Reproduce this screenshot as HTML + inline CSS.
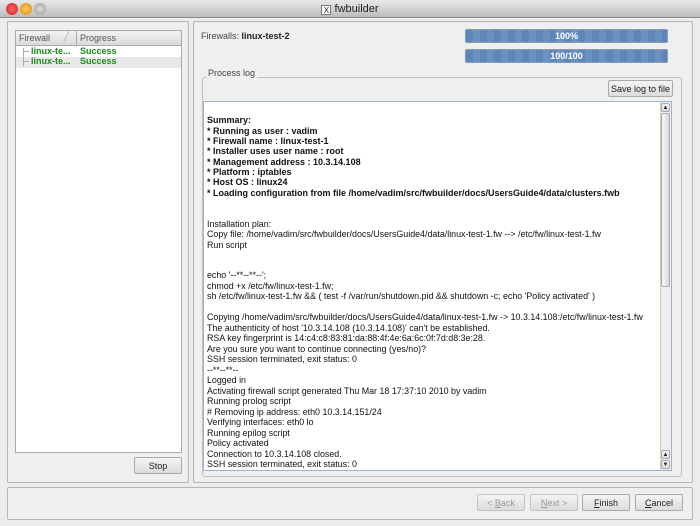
<!DOCTYPE html><html><head><style>
*{box-sizing:border-box;margin:0;padding:0}
body{width:700px;height:526px;background:#ececec;font-family:"Liberation Sans",sans-serif;font-size:9px;color:#222;position:relative;overflow:hidden}
.a{position:absolute}
.tb{left:0;top:0;width:700px;height:18px;background:linear-gradient(#e8e8e8,#bcbcbc);border-bottom:1px solid #8a8a8a;text-align:center;font-size:11px;line-height:18px;color:#222}
.dot{top:3px;width:12px;height:12px;border-radius:50%}
.frame{border:1px solid #b5b5b5;border-radius:2px;background:#efefef}
.btn{border:1px solid #aaa;border-radius:2px;background:linear-gradient(#f4f4f4,#dcdcdc);text-align:center;font-size:9px;line-height:16px;color:#222}
.dis{color:#999;border-color:#c4c4c4}
.bar{left:465px;width:203px;height:14px;border:1px solid #8a9ab0;border-radius:2px;background:repeating-linear-gradient(90deg,#5e87b8 0 7px,#6a91c0 7px 14px);color:#fff;font-weight:bold;text-align:center;line-height:12px;font-size:9px}
.log{left:203px;top:101px;width:469px;height:370px;background:#fff;border:1px solid #9fb3cc;overflow:hidden}
.log div{position:absolute;left:3px;white-space:pre;font-size:8.9px;line-height:11px;color:#111}
.log .b{font-weight:bold;font-size:9px}
.g{color:#1a8a1a;font-weight:bold}
</style></head><body>
<div class="a tb"><span style="display:inline-block;width:10px;height:10px;border:1px solid #777;background:#fff;font-size:8px;line-height:9px;vertical-align:-1px">X</span> fwbuilder</div>
<div class="a dot" style="left:6px;background:radial-gradient(#f66,#c22)"></div>
<div class="a dot" style="left:20px;background:radial-gradient(#fc6,#d80)"></div>
<div class="a dot" style="left:34px;background:radial-gradient(#ddd,#999)"></div>

<div class="a frame" style="left:7px;top:21px;width:182px;height:462px"></div>
<div class="a" style="left:15px;top:30px;width:167px;height:423px;background:#fff;border:1px solid #aaa"></div>
<div class="a" style="left:16px;top:31px;width:165px;height:15px;background:linear-gradient(#f3f3f3,#dadada);border-bottom:1px solid #aaa"></div>
<div class="a" style="left:19px;top:33px;color:#555">Firewall</div>
<div class="a" style="left:64px;top:31px;color:#aaa">╱</div>
<div class="a" style="left:76px;top:31px;width:1px;height:15px;background:#aaa"></div>
<div class="a" style="left:80px;top:33px;color:#555">Progress</div>
<div class="a" style="left:16px;top:57px;width:165px;height:11px;background:#e8e8e8"></div>
<div class="a" style="left:23px;top:48px;width:6px;height:18px;border-left:1px solid #aaa"></div>
<div class="a" style="left:23px;top:51px;width:6px;height:1px;background:#aaa"></div>
<div class="a" style="left:23px;top:61px;width:6px;height:1px;background:#aaa"></div>
<div class="a g" style="left:31px;top:46px">linux-te...</div>
<div class="a g" style="left:80px;top:46px">Success</div>
<div class="a g" style="left:31px;top:56px">linux-te...</div>
<div class="a g" style="left:80px;top:56px">Success</div>
<div class="a btn" style="left:134px;top:457px;width:48px;height:17px">Stop</div>

<div class="a frame" style="left:193px;top:21px;width:500px;height:462px"></div>
<div class="a" style="left:201px;top:31px;color:#444">Firewalls: <b style="color:#222">linux-test-2</b></div>
<div class="a bar" style="top:29px">100%</div>
<div class="a bar" style="top:49px">100/100</div>
<div class="a" style="left:202px;top:77px;width:480px;height:400px;border:1px solid #c0c0c0;border-radius:3px"></div>
<div class="a" style="left:206px;top:68px;background:#efefef;padding:0 2px;color:#444">Process log</div>
<div class="a btn" style="left:608px;top:80px;width:65px;height:17px">Save log to file</div>
<div class="log a">
<div class="b" style="top:13px">Summary:</div>
<div class="b" style="top:23.5px">* Running as user : vadim</div>
<div class="b" style="top:34px">* Firewall name : linux-test-1</div>
<div class="b" style="top:44px">* Installer uses user name : root</div>
<div class="b" style="top:54.5px">* Management address : 10.3.14.108</div>
<div class="b" style="top:65px">* Platform : iptables</div>
<div class="b" style="top:75px">* Host OS : linux24</div>
<div class="b" style="top:85.5px">* Loading configuration from file /home/vadim/src/fwbuilder/docs/UsersGuide4/data/clusters.fwb</div>
<div style="top:116.5px">Installation plan:</div>
<div style="top:127px">Copy file: /home/vadim/src/fwbuilder/docs/UsersGuide4/data/linux-test-1.fw --&gt; /etc/fw/linux-test-1.fw</div>
<div style="top:137.5px">Run script</div>
<div style="top:168px">echo '--**--**--';</div>
<div style="top:178.5px">chmod +x /etc/fw/linux-test-1.fw;</div>
<div style="top:189px">sh /etc/fw/linux-test-1.fw &amp;&amp; ( test -f /var/run/shutdown.pid &amp;&amp; shutdown -c; echo 'Policy activated' )</div>
<div style="top:210px">Copying /home/vadim/src/fwbuilder/docs/UsersGuide4/data/linux-test-1.fw -&gt; 10.3.14.108:/etc/fw/linux-test-1.fw</div>
<div style="top:220.5px">The authenticity of host '10.3.14.108 (10.3.14.108)' can't be established.</div>
<div style="top:231px">RSA key fingerprint is 14:c4:c8:83:81:da:88:4f:4e:6a:6c:0f:7d:d8:3e:28.</div>
<div style="top:241.5px">Are you sure you want to continue connecting (yes/no)?</div>
<div style="top:252px">SSH session terminated, exit status: 0</div>
<div style="top:262.5px">--**--**--</div>
<div style="top:273px">Logged in</div>
<div style="top:283.5px">Activating firewall script generated Thu Mar 18 17:37:10 2010 by vadim</div>
<div style="top:294px">Running prolog script</div>
<div style="top:304.5px"># Removing ip address: eth0 10.3.14.151/24</div>
<div style="top:315px">Verifying interfaces: eth0 lo</div>
<div style="top:325.5px">Running epilog script</div>
<div style="top:336px">Policy activated</div>
<div style="top:346.5px">Connection to 10.3.14.108 closed.</div>
<div style="top:357px">SSH session terminated, exit status: 0</div>
</div>
<div class="a" style="left:660px;top:102px;width:11px;height:368px;background:#eee;border-left:1px solid #ccc"></div>
<div class="a" style="left:661px;top:113px;width:9px;height:174px;background:linear-gradient(90deg,#f6f6f6,#d8d8d8);border:1px solid #aaa;border-radius:2px"></div>
<div class="a btn" style="left:661px;top:103px;width:9px;height:9px;line-height:8px;font-size:6px">▲</div>
<div class="a btn" style="left:661px;top:450px;width:9px;height:9px;line-height:8px;font-size:6px">▲</div>
<div class="a btn" style="left:661px;top:460px;width:9px;height:9px;line-height:8px;font-size:6px">▼</div>

<div class="a frame" style="left:7px;top:487px;width:686px;height:33px"></div>
<div class="a btn dis" style="left:477px;top:494px;width:48px;height:17px">&lt; <u>B</u>ack</div>
<div class="a btn dis" style="left:530px;top:494px;width:48px;height:17px"><u>N</u>ext &gt;</div>
<div class="a btn" style="left:582px;top:494px;width:48px;height:17px"><u>F</u>inish</div>
<div class="a btn" style="left:635px;top:494px;width:48px;height:17px"><u>C</u>ancel</div>
</body></html>
